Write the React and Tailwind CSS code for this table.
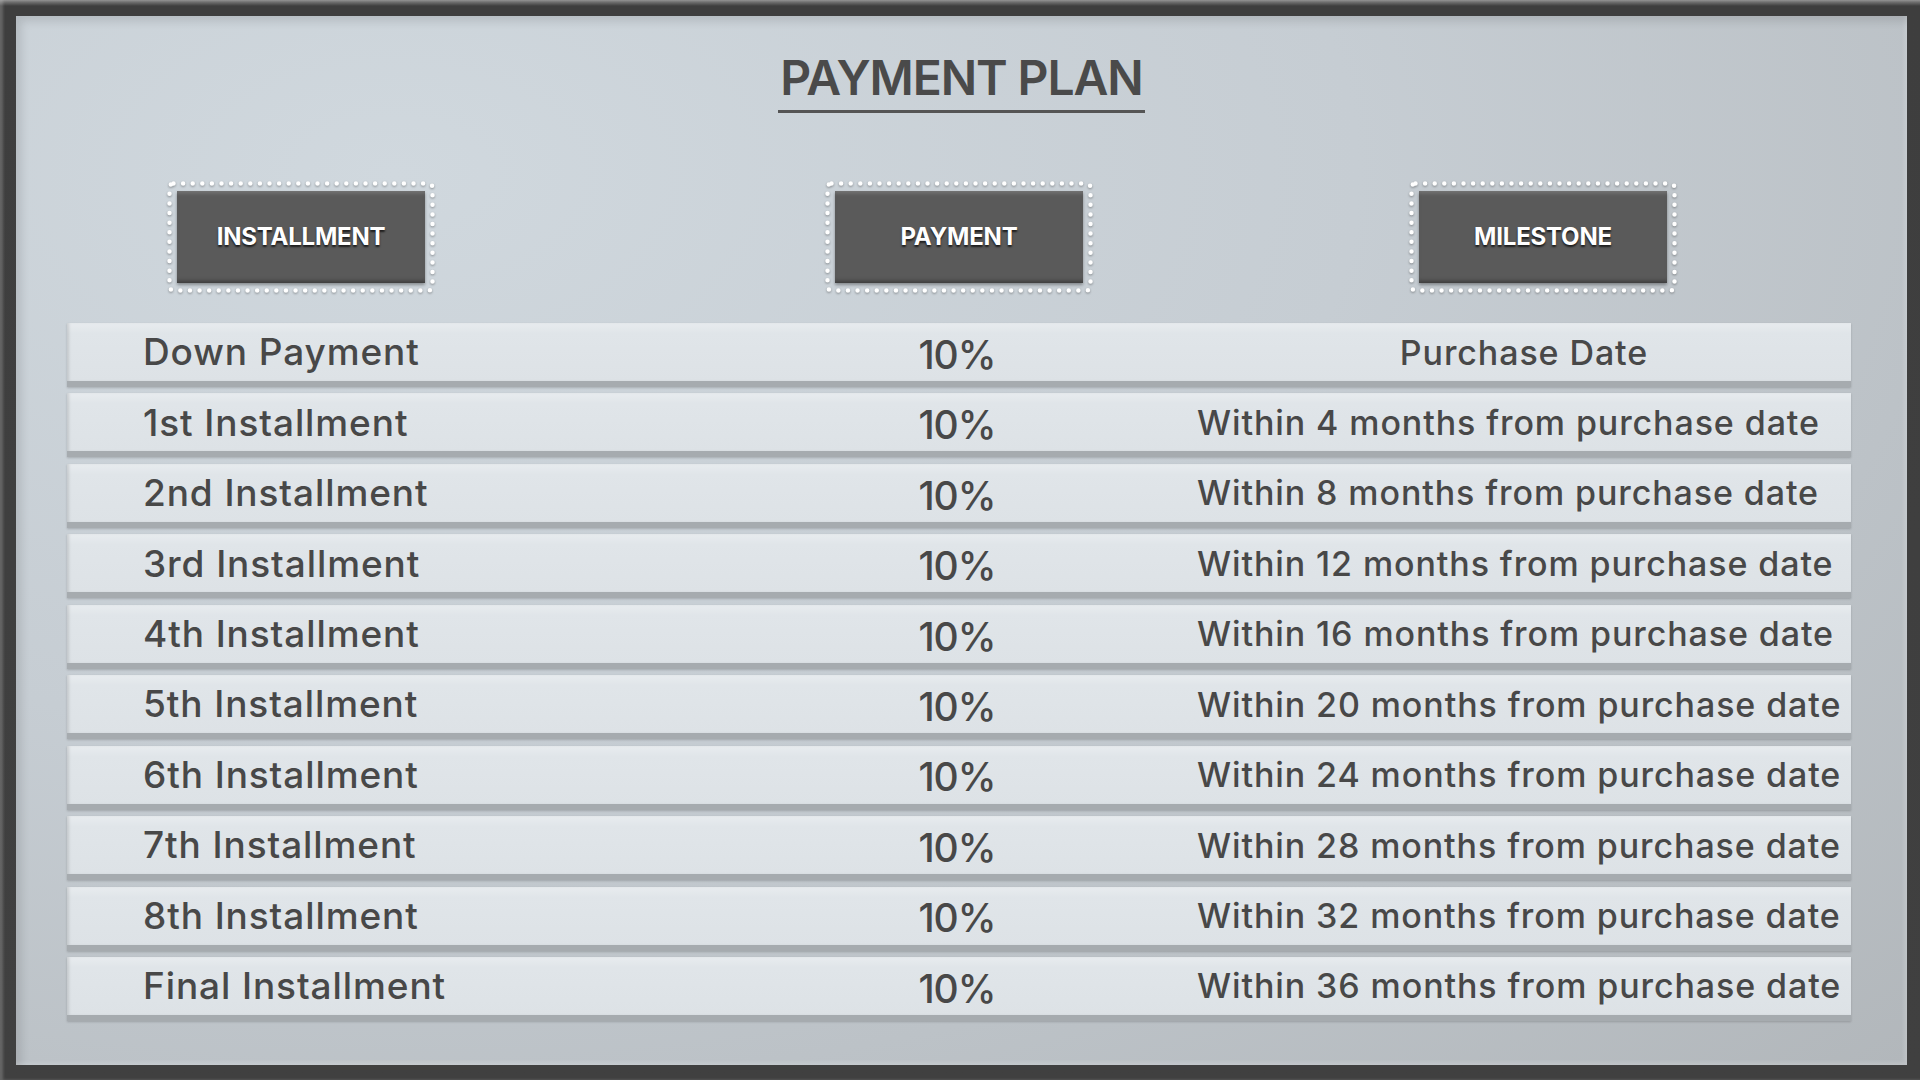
import React from "react";

const rows = [
  ["Down Payment", "10%", "Purchase Date"],
  ["1st Installment", "10%", "Within 4 months from purchase date"],
  ["2nd Installment", "10%", "Within 8 months from purchase date"],
  ["3rd Installment", "10%", "Within 12 months from purchase date"],
  ["4th Installment", "10%", "Within 16 months from purchase date"],
  ["5th Installment", "10%", "Within 20 months from purchase date"],
  ["6th Installment", "10%", "Within 24 months from purchase date"],
  ["7th Installment", "10%", "Within 28 months from purchase date"],
  ["8th Installment", "10%", "Within 32 months from purchase date"],
  ["Final Installment", "10%", "Within 36 months from purchase date"],
];

// dark label with the white dotted frame around it
const HeaderTag = ({ label, className }) => (
  <div className={`relative shrink-0 w-[268px] h-[112px] p-[10px] ${className}`}>
    <svg
      className="absolute inset-0 drop-shadow-[0_1px_1px_rgba(0,0,0,0.35)]"
      width="268"
      height="112"
    >
      <rect
        x="2.5"
        y="2.5"
        width="263"
        height="107"
        rx="4"
        fill="none"
        stroke="#ffffff"
        strokeWidth="4.5"
        strokeLinecap="round"
        strokeDasharray="0 9.6"
      />
    </svg>
    <div className="relative h-full flex items-center justify-center bg-[#5a5a5a] shadow-[inset_0_4px_4px_-2px_rgba(255,255,255,0.18),inset_0_-4px_4px_-2px_rgba(0,0,0,0.35),0_2px_3px_rgba(0,0,0,0.35)]">
      <span className="text-white text-[24px] font-bold tracking-[-0.2px] [text-shadow:0_2px_2px_rgba(0,0,0,0.7)]">
        {label}
      </span>
    </div>
  </div>
);

export default function App() {
  return (
    <div className="w-[1920px] h-[1080px] bg-[linear-gradient(#8a8a8a,#3e3e3e_6px,#404040)] pt-[16px] pl-[16px] pr-[13px] pb-[15px] font-['Inter',sans-serif] shadow-[inset_3px_0_3px_rgba(255,255,255,0.2)]">
      <div className="h-full flex flex-col bg-[radial-gradient(ellipse_at_20%_15%,#d0d8de_0%,#c6cdd3_45%,#b2b7bb_100%)] shadow-[inset_5px_5px_10px_rgba(0,0,0,0.12),inset_-2px_-2px_4px_rgba(255,255,255,0.25)]">
        <div className="flex justify-center pt-[36px]">
          <h1 className="text-[48px] leading-[52px] font-semibold tracking-[-1.1px] text-[#4a4a4a] pb-[6px] px-[2px] border-b-[3px] border-[#555555]">
            PAYMENT PLAN
          </h1>
        </div>

        <div className="flex mt-[68px] ml-[151px]">
          <HeaderTag label="INSTALLMENT" />
          <HeaderTag label="PAYMENT" className="ml-[390px]" />
          <HeaderTag label="MILESTONE" className="ml-[316px]" />
        </div>

        <div className="flex flex-col gap-[6.44px] mt-[30px] ml-[51px] w-[1784px]">
          {rows.map(([name, pct, milestone], i) => (
            <div
              key={name}
              className="h-[64px] flex items-center text-[#484848] font-medium bg-[linear-gradient(#e8ecef,#e0e5e9_18%,#dde2e6)] border-b-[6px] border-[#a6abaf] shadow-[inset_3px_0_3px_-1px_rgba(0,0,0,0.12),0_1px_2px_rgba(0,0,0,0.18)]"
            >
              <div className="shrink-0 w-[793px] pl-[76px] text-[37px] tracking-[0.9px] whitespace-nowrap">
                {name}
              </div>
              <div className="shrink-0 w-[194px] text-center text-[39px] tracking-[-1px] pt-[6px]">
                {pct}
              </div>
              <div
                className={`flex-1 min-w-0 text-[34px] tracking-[0.9px] whitespace-nowrap ${
                  i === 0 ? "text-center pl-[143px]" : "pl-[143px]"
                }`}
              >
                {milestone}
              </div>
            </div>
          ))}
        </div>
      </div>
    </div>
  );
}
